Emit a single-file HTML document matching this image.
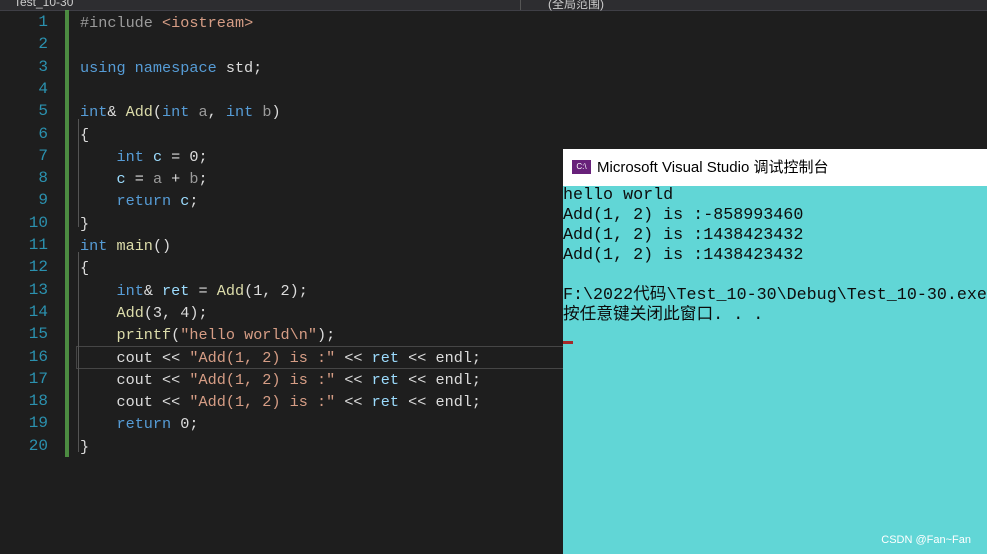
<!DOCTYPE html>
<html><head><meta charset="utf-8"><style>
body{margin:0;width:987px;height:554px;background:#1e1e1e;position:relative;overflow:hidden;font-family:"Liberation Mono","Noto Sans CJK SC",monospace}
.top{position:absolute;left:0;top:0;width:987px;height:10px;background:#2d2d30;border-bottom:1px solid #3f3f46}
.ln{position:absolute;left:0;width:48px;text-align:right;color:#2b91af;font-size:16px}
.code{position:absolute;left:80px;font-size:15.2px;color:#dcdcdc;white-space:pre}
.k{color:#569cd6}.s{color:#d69d85}.f{color:#dcdcaa}.p{color:#9b9b9b}.v{color:#9cdcfe}.i{color:#9b9b9b}.inc{color:#d69d85}
.bar{position:absolute;left:65px;top:10px;width:4px;height:447px;background:#57a64a;opacity:.8}
.con{position:absolute;left:563px;top:149px;width:424px;height:405px;background:#61d6d6}
.title{height:37px;background:#fff;font-family:"Liberation Sans","Noto Sans CJK SC",sans-serif;font-size:15px;color:#000;line-height:37px;padding-left:34px;position:relative}
.ico{position:absolute;left:9px;top:11px;width:19px;height:14px;background:#68217a;color:#fff;font-size:8px;line-height:14px;text-align:center}
.out{font-size:16.7px;line-height:20px;color:#0c0c0c;white-space:pre;font-family:"Liberation Mono","Noto Sans CJK SC",monospace}
</style></head><body>
<div class="top"><span style="color:#ccc;font:12px 'Liberation Sans';position:absolute;left:14px;top:-5px">Test_10-30</span><span style="position:absolute;left:520px;top:0;width:1px;height:10px;background:#555"></span><span style="color:#ccc;font:12px 'Liberation Sans';position:absolute;left:548px;top:-5px">(全局范围)</span></div>
<div class="bar"></div>
<div style="position:absolute;left:76px;top:346px;width:487px;height:21px;border:1px solid #464646"></div>
<div style="position:absolute;left:78px;top:119px;width:1px;height:108px;background:#555"></div>
<div style="position:absolute;left:78px;top:252px;width:1px;height:200px;background:#555"></div>
<div id="g"></div>
<div class="con"><div class="title"><span class="ico">C:\</span>Microsoft Visual Studio 调试控制台</div>
<div class="out">hello world
Add(1, 2) is :-858993460
Add(1, 2) is :1438423432
Add(1, 2) is :1438423432

F:\2022代码\Test_10-30\Debug\Test_10-30.exe
按任意键关闭此窗口. . .</div>
<div style="position:absolute;left:0;top:192px;width:10px;height:3px;background:#a52a2a"></div>
<div style="position:absolute;right:16px;bottom:8px;color:#fff;font:11px 'Liberation Sans','Noto Sans CJK SC',sans-serif">CSDN @Fan~Fan</div>
</div>
<script>
var L=[
'<span class="p">#include</span> <span class="inc">&lt;iostream&gt;</span>','',
'<span class="k">using namespace</span> std;','',
'<span class="k">int</span>&amp; <span class="f">Add</span>(<span class="k">int</span> <span class="i">a</span>, <span class="k">int</span> <span class="i">b</span>)',
'{','    <span class="k">int</span> <span class="v">c</span> = 0;','    <span class="v">c</span> = <span class="i">a</span> + <span class="i">b</span>;','    <span class="k">return</span> <span class="v">c</span>;','}',
'<span class="k">int</span> <span class="f">main</span>()','{',
'    <span class="k">int</span>&amp; <span class="v">ret</span> = <span class="f">Add</span>(1, 2);',
'    <span class="f">Add</span>(3, 4);',
'    <span class="f">printf</span>(<span class="s">"hello world\\n"</span>);'];
for(var j=0;j<3;j++)L.push('    cout &lt;&lt; <span class="s">"Add(1, 2) is :"</span> &lt;&lt; <span class="v">ret</span> &lt;&lt; endl;');
L.push('    <span class="k">return</span> 0;','}');
var h='';for(var i=0;i<20;i++){var y=13+i*22.3;h+='<div class="ln" style="top:'+y+'px">'+(i+1)+'</div><div class="code" style="top:'+(y+1)+'px">'+L[i]+'</div>';}
document.getElementById('g').innerHTML=h;
</script>
</body></html>
